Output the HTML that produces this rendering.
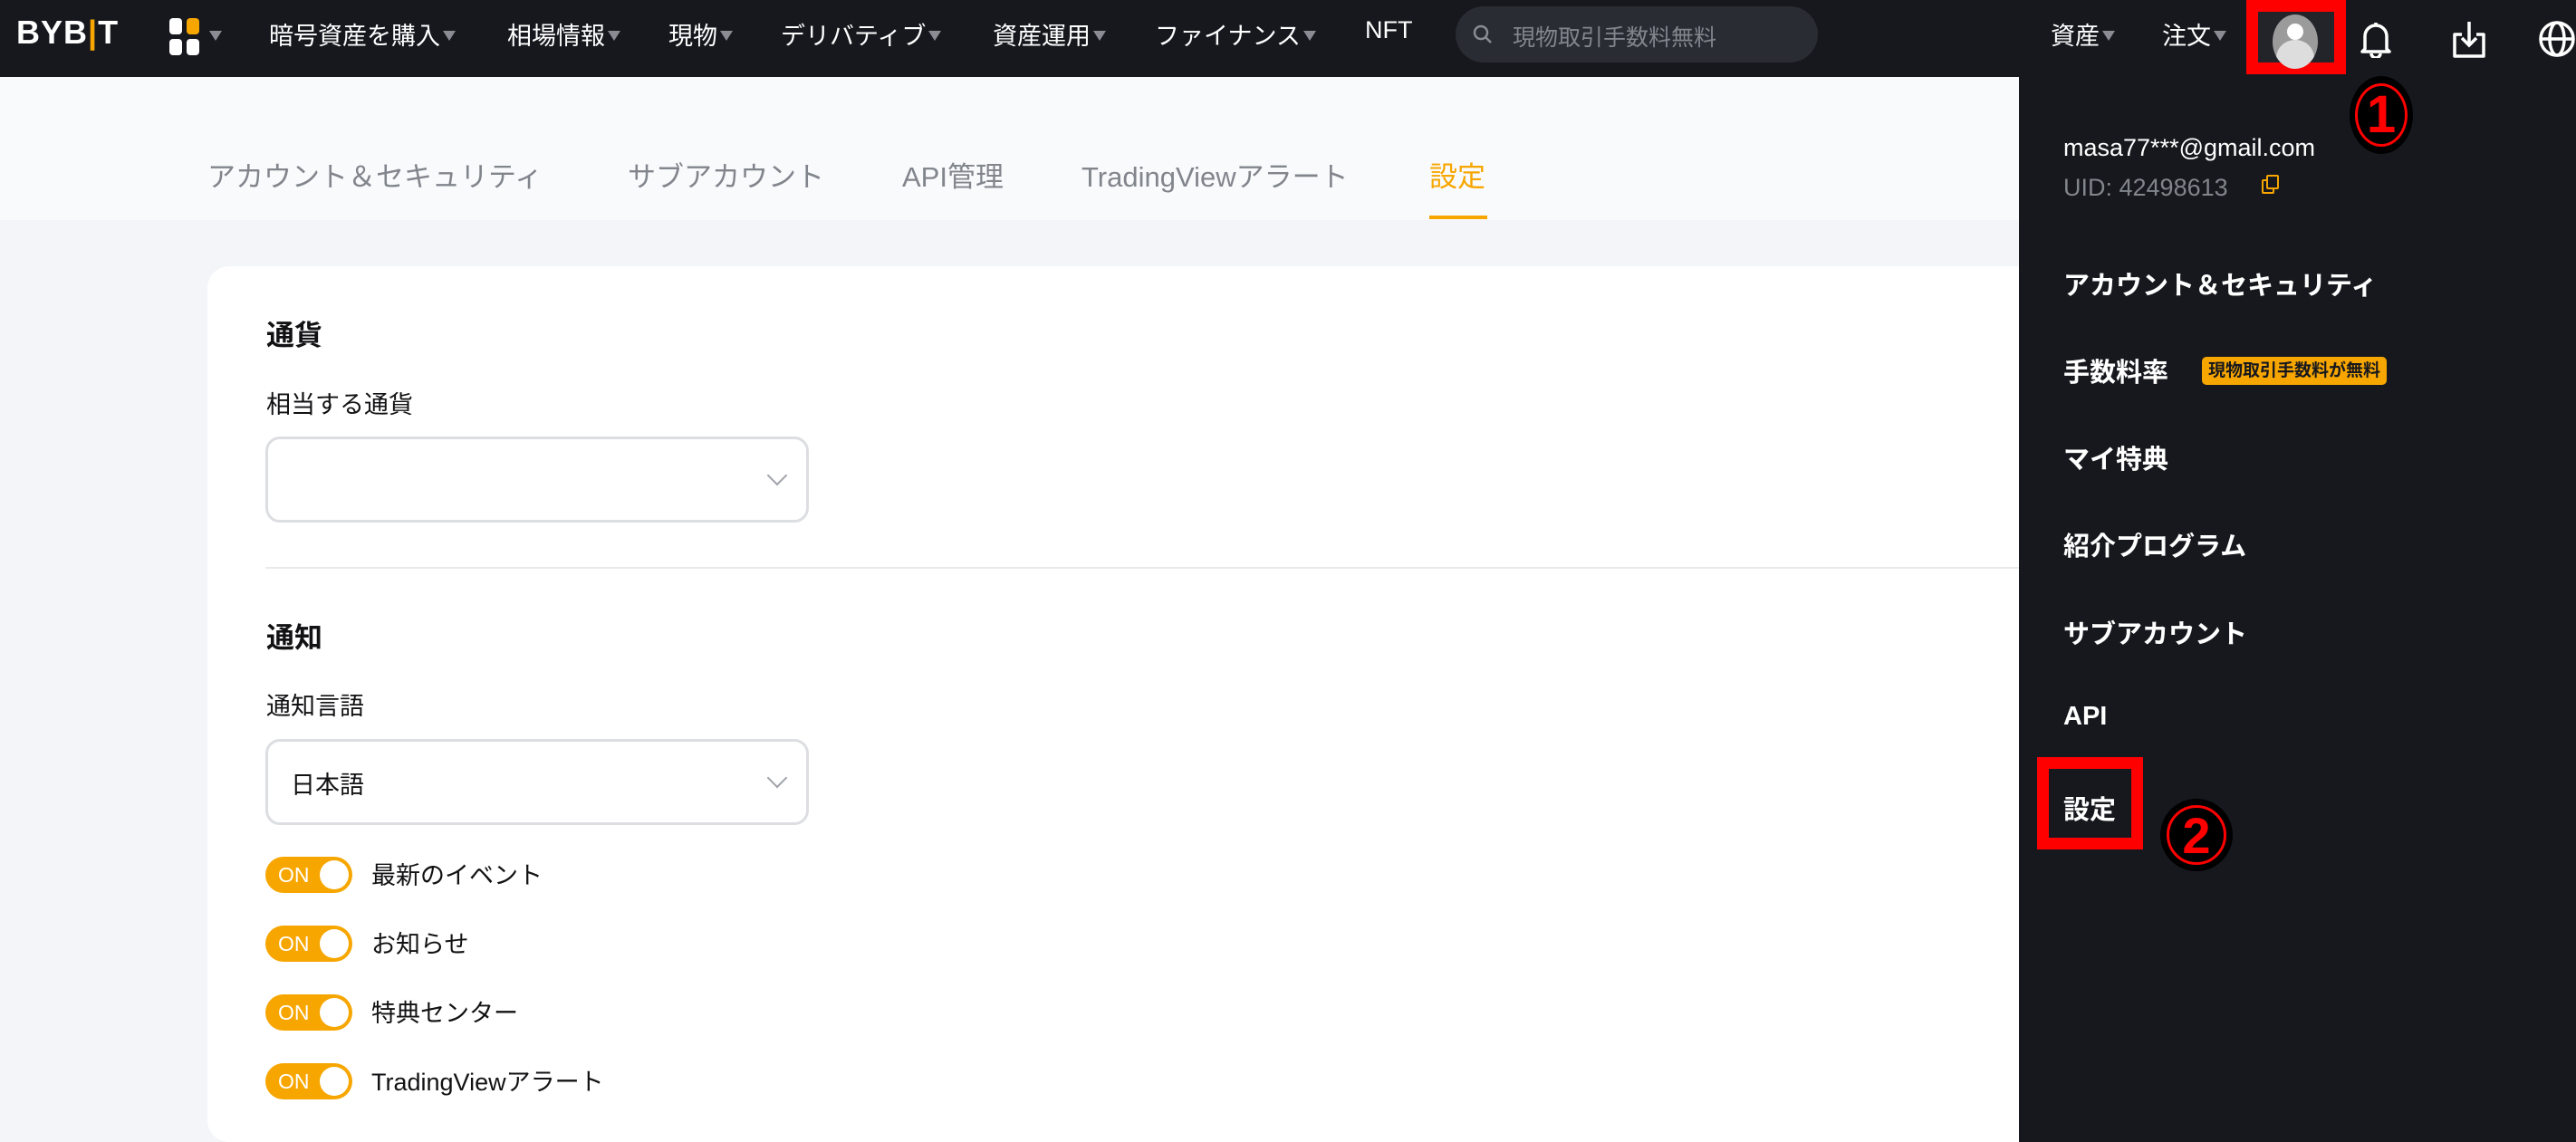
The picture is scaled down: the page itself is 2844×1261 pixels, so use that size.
<!DOCTYPE html>
<html style="width:2844px;height:1261px;overflow:hidden"><head><meta charset="utf-8"><style>
*{margin:0;padding:0;box-sizing:border-box}
body{width:2844px;height:1261px;overflow:hidden;background:#f4f5f8;font-family:"Liberation Sans","Noto Sans CJK JP",sans-serif;position:relative}
.a{position:absolute;white-space:nowrap}
.nav{position:absolute;left:0;top:0;width:2844px;height:85px;background:#17181e}
.nv{color:#fff;font-size:27px;top:18px}
.tri{display:inline-block;width:0;height:0;border-left:7px solid transparent;border-right:7px solid transparent;border-top:11px solid #8a8c93;margin-left:3px;vertical-align:4px}
.sub{position:absolute;left:0;top:85px;width:2229px;height:158px;background:#f9fafc}
.tab{top:170px;font-size:31px;color:#81858c}
.card{position:absolute;left:229px;top:294px;width:2100px;height:1000px;background:#fff;border-radius:24px}
.h{font-size:31px;font-weight:bold;color:#121214;left:294px}
.lbl{font-size:27px;color:#121214;left:294px}
.sel{position:absolute;left:293px;width:600px;height:95px;border:3px solid #dcdee2;border-radius:16px;background:#fff}
.chev{position:absolute;right:24px;top:32px;width:16px;height:16px;border-right:2px solid #a0a4aa;border-bottom:2px solid #a0a4aa;transform:rotate(45deg)}
.tg{position:absolute;left:293px;width:96px;height:40px;border-radius:20px;background:#f7a600}
.tg span{position:absolute;left:14px;top:7px;color:#fff;font-size:23px}
.tg i{position:absolute;right:4px;top:4px;width:32px;height:32px;border-radius:50%;background:#fff}
.tl{left:410px;font-size:27px;color:#121214}
.panel{position:absolute;left:2229px;top:85px;width:615px;height:1176px;background:#17181e}
.mi{left:2278px;color:#fff;font-size:29px;font-weight:bold}
</style></head><body>
<div class="nav"></div>
<div class="a" style="left:18px;top:15px;color:#fff;font-size:36px;font-weight:bold;letter-spacing:1px">BYB<span style="color:#f7a600">|</span>T</div>
<div class="a" style="left:187px;top:20px;width:40px;height:44px">
<div style="position:absolute;left:0;top:0;width:14px;height:18px;background:#fff;border-radius:4px"></div>
<div style="position:absolute;left:19px;top:0;width:14px;height:18px;background:#f7a600;border-radius:4px"></div>
<div style="position:absolute;left:0;top:23px;width:14px;height:18px;background:#fff;border-radius:4px"></div>
<div style="position:absolute;left:19px;top:23px;width:14px;height:18px;background:#fff;border-radius:4px"></div>
</div>
<span class="a tri" style="left:228px;top:34px"></span>
<div class="a nv" style="left:297px">暗号資産を購入<span class="tri"></span></div>
<div class="a nv" style="left:560px">相場情報<span class="tri"></span></div>
<div class="a nv" style="left:738px">現物<span class="tri"></span></div>
<div class="a nv" style="left:862px">デリバティブ<span class="tri"></span></div>
<div class="a nv" style="left:1096px">資産運用<span class="tri"></span></div>
<div class="a nv" style="left:1275px">ファイナンス<span class="tri"></span></div>
<div class="a nv" style="left:1507px">NFT</div>
<div class="a" style="left:1607px;top:7px;width:400px;height:62px;border-radius:31px;background:#2a2c33"></div>
<svg class="a" style="left:1625px;top:26px" width="24" height="24" viewBox="0 0 24 24"><circle cx="10" cy="10" r="7" fill="none" stroke="#8a8c93" stroke-width="2.5"/><path d="M15 15l6 6" stroke="#8a8c93" stroke-width="2.5"/></svg>
<div class="a" style="left:1670px;top:22px;color:#81858c;font-size:25px">現物取引手数料無料</div>
<div class="a nv" style="left:2264px">資産<span class="tri"></span></div>
<div class="a nv" style="left:2387px">注文<span class="tri"></span></div>
<div class="a" style="left:2480px;top:0;width:110px;height:82px;border:13px solid #f00;background:#23242a"></div>
<div class="a" style="left:2509px;top:16px;width:50px;height:60px;border-radius:50%;background:#9b9b9b;overflow:hidden">
<div style="position:absolute;left:16px;top:10px;width:18px;height:18px;border-radius:50%;background:#fff"></div>
<div style="position:absolute;left:4px;top:28px;width:42px;height:40px;border-radius:50%;background:#ddd"></div></div>
<svg class="a" style="left:2605px;top:22px" width="36" height="42" viewBox="0 0 36 42"><path d="M6 32V18a12 12 0 0 1 24 0v14l3 3H3z" fill="none" stroke="#fff" stroke-width="3.5" stroke-linejoin="round"/><path d="M13 37a5 5 0 0 0 10 0M18 3v3" stroke="#fff" stroke-width="3.5" fill="none"/></svg>
<svg class="a" style="left:2706px;top:22px" width="40" height="42" viewBox="0 0 40 42"><path d="M12 16H4v24h32V16h-8" fill="none" stroke="#fff" stroke-width="3.5" stroke-linejoin="round"/><path d="M20 2v26M12 20l8 8 8-8" fill="none" stroke="#fff" stroke-width="3.5"/></svg>
<svg class="a" style="left:2802px;top:22px" width="42" height="42" viewBox="0 0 42 42"><circle cx="21" cy="21" r="18" fill="none" stroke="#fff" stroke-width="3.5"/><ellipse cx="21" cy="21" rx="8" ry="18" fill="none" stroke="#fff" stroke-width="3.5"/><path d="M3 21h36" stroke="#fff" stroke-width="3.5"/></svg>

<div class="sub"></div>
<div class="a tab" style="left:229px">アカウント＆セキュリティ</div>
<div class="a tab" style="left:693px">サブアカウント</div>
<div class="a tab" style="left:996px">API管理</div>
<div class="a tab" style="left:1194px">TradingViewアラート</div>
<div class="a tab" style="left:1578px;color:#f7a600">設定</div>
<div class="a" style="left:1578px;top:238px;width:64px;height:4px;background:#f7a600"></div>

<div class="card" style="height:967px"></div>
<div class="a h" style="top:345px">通貨</div>
<div class="a lbl" style="top:425px">相当する通貨</div>
<div class="sel" style="top:482px"><div class="chev"></div></div>
<div class="a" style="left:293px;top:626px;width:1936px;height:2px;background:#e9eaed"></div>
<div class="a h" style="top:679px">通知</div>
<div class="a lbl" style="top:758px">通知言語</div>
<div class="sel" style="top:816px"><div class="chev"></div><div class="a" style="left:25px;top:26px;font-size:27px;color:#121214">日本語</div></div>
<div class="tg" style="top:946px"><span>ON</span><i></i></div><div class="a tl" style="top:945px">最新のイベント</div>
<div class="tg" style="top:1022px"><span>ON</span><i></i></div><div class="a tl" style="top:1021px">お知らせ</div>
<div class="tg" style="top:1098px"><span>ON</span><i></i></div><div class="a tl" style="top:1097px">特典センター</div>
<div class="tg" style="top:1174px"><span>ON</span><i></i></div><div class="a tl" style="top:1173px">TradingViewアラート</div>

<div class="panel"></div>
<div class="a" style="left:2278px;top:148px;color:#fff;font-size:27px">masa77***@gmail.com</div>
<div class="a" style="left:2278px;top:192px;color:#81858c;font-size:27px">UID: 42498613</div>
<div class="a" style="left:2497px;top:198px;width:14px;height:16px;border:2px solid #f7a600;border-radius:2px"></div>
<div class="a" style="left:2502px;top:193px;width:14px;height:16px;border:2px solid #f7a600;border-radius:2px;background:#17181e"></div>
<div class="a mi" style="top:292px">アカウント＆セキュリティ</div>
<div class="a mi" style="top:388px">手数料率</div>
<div class="a" style="left:2431px;top:394px;width:204px;height:31px;border-radius:5px;background:#f7a600;color:#17181e;font-size:19px;font-weight:bold;text-align:center;line-height:31px">現物取引手数料が無料</div>
<div class="a mi" style="top:484px">マイ特典</div>
<div class="a mi" style="top:580px">紹介プログラム</div>
<div class="a mi" style="top:677px">サブアカウント</div>
<div class="a mi" style="top:775px">API</div>
<div class="a mi" style="top:871px">設定</div>
<div class="a" style="left:2249px;top:836px;width:117px;height:102px;border:13px solid #f00"></div>
<div class="a" style="left:2594px;top:84px;width:70px;height:86px;border-radius:50%;background:#000"></div>
<div class="a" style="left:2600px;top:92px;width:58px;height:70px;border-radius:50%;border:3px solid #f00;color:#f00;font-size:58px;font-weight:bold;text-align:center;line-height:64px">1</div>
<div class="a" style="left:2385px;top:882px;width:80px;height:80px;border-radius:50%;background:#000"></div>
<div class="a" style="left:2392px;top:889px;width:66px;height:66px;border-radius:50%;border:3px solid #f00;color:#f00;font-size:56px;font-weight:bold;text-align:center;line-height:62px">2</div>
</body></html>
